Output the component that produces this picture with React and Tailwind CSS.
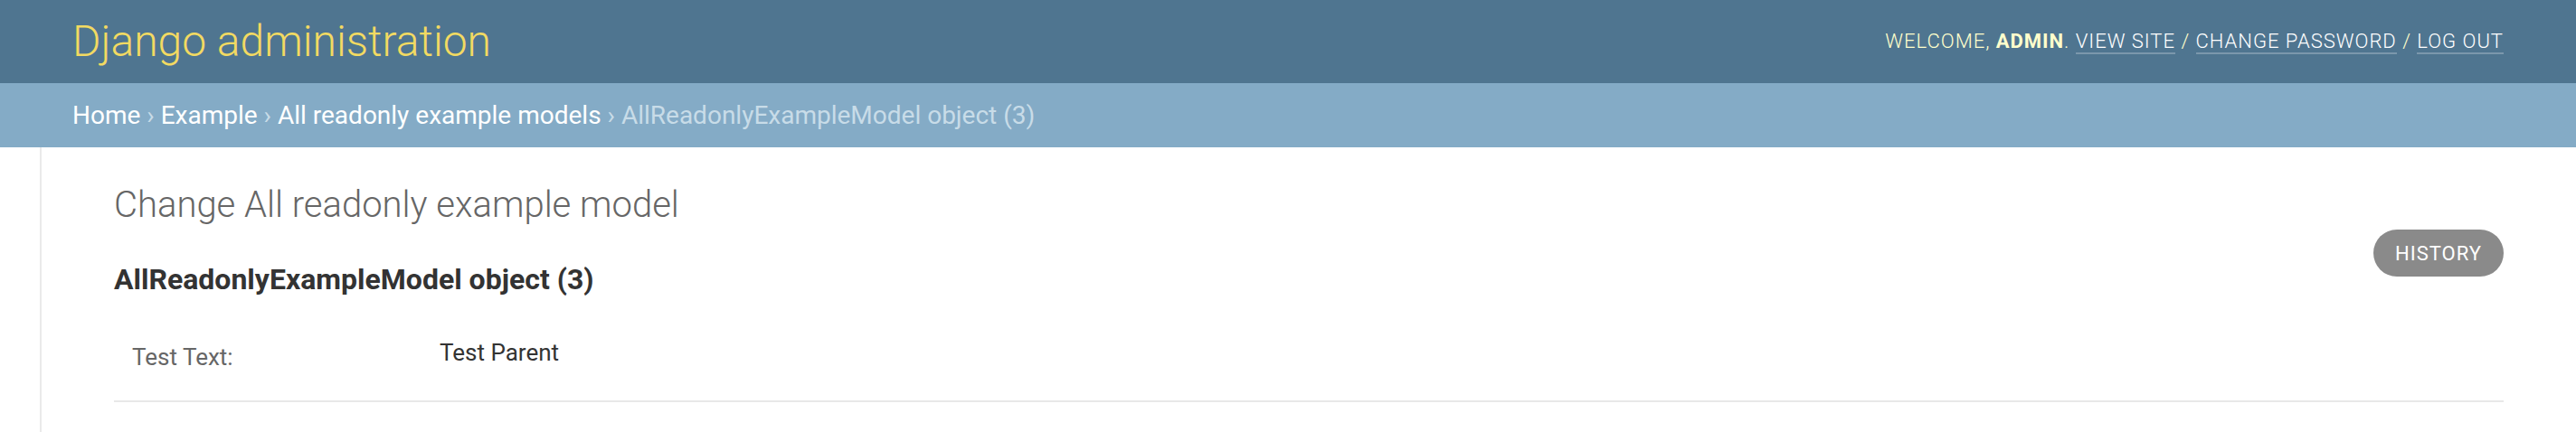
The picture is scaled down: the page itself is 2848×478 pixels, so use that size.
const crumbs = ['Home', 'Example', 'All readonly example models'];

function Header() {
  return (
    <div className="flex h-[92px] items-center justify-between bg-[#4f7590] px-[80px]">
      <h1 className="text-[48px] font-light leading-[56px] text-[#f2da62]">Django administration</h1>
      <div className="text-[22px] font-light uppercase tracking-[1px] leading-[26px] text-[#ffffcc]">
        Welcome, <strong className="font-bold">admin</strong>.{' '}
        <a className="border-b-2 border-white/25 text-white">View site</a> /{' '}
        <a className="border-b-2 border-white/25 text-white">Change password</a> /{' '}
        <a className="border-b-2 border-white/25 text-white">Log out</a>
      </div>
    </div>
  );
}

function Breadcrumbs() {
  return (
    <div className="bg-[#84abc6] px-[80px] py-[20px] text-[28px] leading-[31px] text-[#c8dce8]">
      {crumbs.map((c) => (
        <span key={c}>
          <a className="text-white">{c}</a> ›{' '}
        </span>
      ))}
      AllReadonlyExampleModel object (3)
    </div>
  );
}

export default function App() {
  return (
    <div className="h-[478px] overflow-hidden bg-white font-['Roboto',sans-serif]">
      <Header />
      <Breadcrumbs />
      <div className="flex">
        <div className="h-[315px] w-[46px] shrink-0 border-r-2 border-[#eaeaea]" />
        <div className="flex-1 px-[80px] pt-[40px]">
          <div className="flex items-start justify-between">
            <div>
              <h1 className="text-[40px] font-light leading-[47px] text-[#666]">Change All readonly example model</h1>
              <h2 className="mt-[40px] text-[32px] font-bold leading-[38px] text-[#333]">
                AllReadonlyExampleModel object (3)
              </h2>
            </div>
            <a className="mt-[51px] flex h-[52px] items-center rounded-full bg-[#8a8a8a] px-[24px] text-[22px] uppercase tracking-[1px] text-white">
              History
            </a>
          </div>
          <div className="mt-[27px] flex border-b-2 border-[#e8e8e8] px-[20px] pb-[33px] pt-[20px]">
            <label className="w-[340px] shrink-0 pt-[5px] text-[26px] leading-[30px] text-[#666]">Test Text:</label>
            <div className="text-[26px] leading-[30px] text-[#333]">Test Parent</div>
          </div>
        </div>
      </div>
    </div>
  );
}
